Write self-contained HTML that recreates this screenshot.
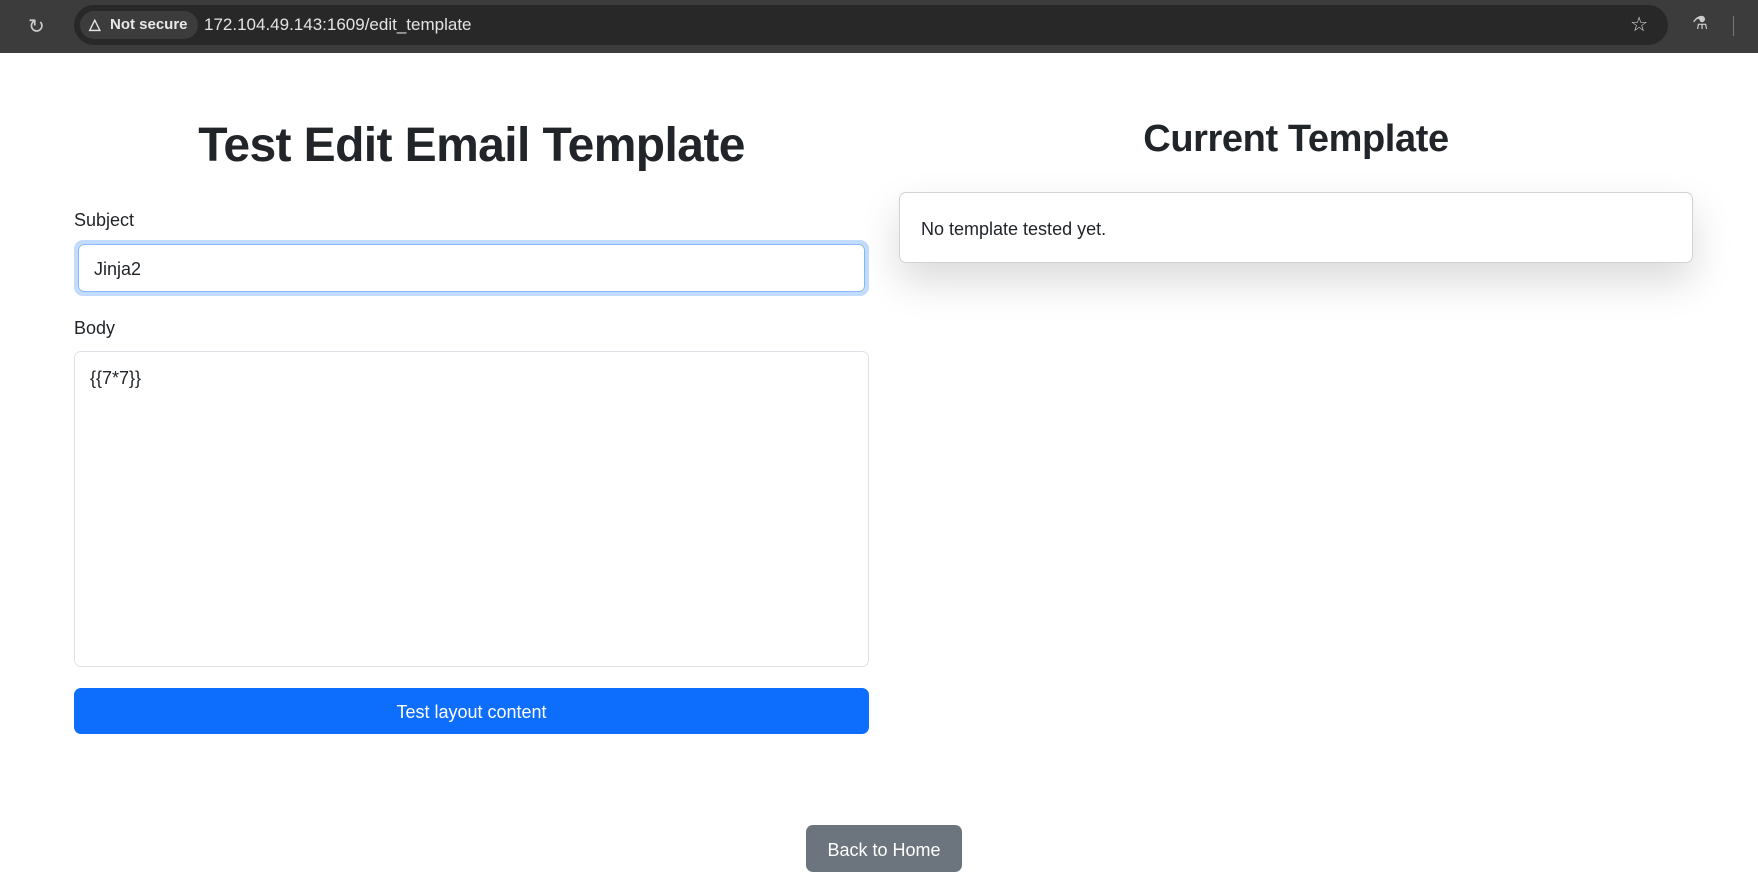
<!DOCTYPE html>
<html><head><meta charset="utf-8"><style>
*{box-sizing:border-box;margin:0;padding:0}
body{width:1758px;height:879px;overflow:hidden;background:#fff;font-family:"Liberation Sans",sans-serif;color:#212529;position:relative}
.top{position:absolute;left:0;top:0;width:1758px;height:53px;background:#3c3c3c}
.pill{position:absolute;left:74px;top:5px;width:1594px;height:40px;background:#282828;border-radius:20px}
.ns{position:absolute;left:6px;top:6px;height:28px;padding:0 10px 0 30px;background:#3c3c3c;border-radius:14px;color:#e8e8e8;font-size:15px;font-weight:bold;line-height:28px}
.url{position:absolute;left:130px;top:0;line-height:40px;color:#e3e3e3;font-size:17px}
.a{position:absolute}
h1{position:absolute;left:74px;width:795px;top:117px;text-align:center;font-size:48px;font-weight:bold;letter-spacing:-0.6px;line-height:1.2}
h2{position:absolute;left:899px;width:794px;top:117px;text-align:center;font-size:38px;font-weight:bold;letter-spacing:-0.4px;line-height:1.2}
label{position:absolute;left:74px;font-size:18px}
.inp{position:absolute;left:74px;width:795px;border:1px solid #dee2e6;border-radius:7px;font-size:18px;padding:0 15px}
.btn{position:absolute;color:#fff;font-size:18px;text-align:center;border-radius:7px}
.card{position:absolute;left:899px;top:192px;width:794px;height:71px;border:1px solid rgba(0,0,0,.175);border-radius:7px;box-shadow:0 18px 40px rgba(0,0,0,.15);font-size:18px;line-height:72px;padding-left:21px}
</style></head><body>
<div class="top">
<div class="a" style="left:28px;top:14px;color:#ccc;font-size:20px">&#8635;</div>
<div class="pill"><div class="ns"><span style="position:absolute;left:9px;top:0;font-size:15px">&#9651;</span>Not secure</div><div class="url">172.104.49.143:1609/edit_template</div>
<div class="a" style="right:20px;top:7px;color:#ddd;font-size:20px">&#9734;</div></div>
<div class="a" style="left:1692px;top:13px;color:#ccc;font-size:18px">&#9879;</div>
<div class="a" style="left:1733px;top:16px;width:1px;height:20px;background:#777"></div>
</div>
<h1>Test Edit Email Template</h1>
<h2>Current Template</h2>
<label style="top:210px">Subject</label>
<div class="inp" style="top:240px;height:56px;border:4px solid #c2dbfe;border-radius:9px;padding:0"><div style="border:1px solid #86b7fe;border-radius:6px;height:48px;line-height:48px;padding-left:15px">Jinja2</div></div>
<label style="top:318px">Body</label>
<div class="inp" style="top:351px;height:316px;padding-top:16px">{{7*7}}</div>
<div class="btn" style="left:74px;top:688px;width:795px;height:46px;line-height:49px;background:#0d6efd">Test layout content</div>
<div class="card">No template tested yet.</div>
<div class="btn" style="left:806px;top:825px;width:156px;height:47px;line-height:50px;background:#6c757d">Back to Home</div>
</body></html>
